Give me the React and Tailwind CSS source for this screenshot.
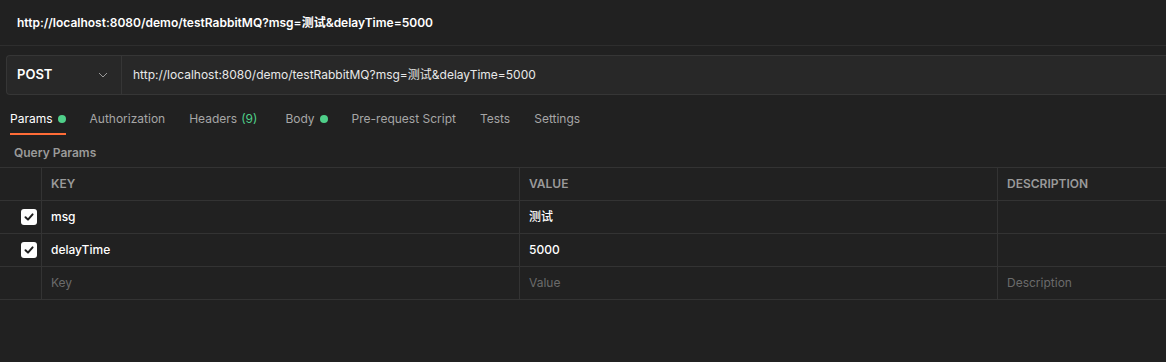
import React from "react";

const font = { fontFamily: 'Inter, "Noto Sans CJK SC", sans-serif' };

function Check() {
  return (
    <div className="w-4 h-4 rounded-[3px] bg-white flex items-center justify-center">
      <svg width="12" height="12" viewBox="0 0 12 12" fill="none">
        <path d="M2.5 6.2 L5 8.6 L9.6 3.4" stroke="#1f1f1f" strokeWidth="2" strokeLinecap="round" strokeLinejoin="round" />
      </svg>
    </div>
  );
}

function Dot() {
  return <span className="inline-block w-2 h-2 rounded-full bg-[#4fcf89] ml-[5px]" />;
}

export default function App() {
  const tabs = [
    { label: "Params", active: true, dot: true },
    { label: "Authorization" },
    { label: "Headers", count: "(9)" },
    { label: "Body", dot: true },
    { label: "Pre-request Script" },
    { label: "Tests" },
    { label: "Settings" },
  ];
  const rows = [
    { key: "msg", value: "测试", checked: true },
    { key: "delayTime", value: "5000", checked: true },
  ];
  return (
    <div className="w-[1166px] h-[362px] bg-[#212121] overflow-hidden text-[12px]" style={font}>
      <div className="h-[46px] border-b border-[#2e2e2e] flex items-center pl-[17px]">
        <span className="font-semibold text-white">http://localhost:8080/demo/testRabbitMQ?msg=测试&amp;delayTime=5000</span>
      </div>
      <div className="pl-[6px] pt-[9px]">
        <div className="h-[40px] flex border border-r-0 border-[#363636] rounded-l-[4px] bg-[#282828]">
          <div className="w-[115px] flex items-center justify-between pl-[10px] pr-[13px] border-r border-[#363636]">
            <span className="font-semibold text-white text-[13px]">POST</span>
            <svg width="10" height="6" viewBox="0 0 10 6" fill="none">
              <path d="M1 1 L5 5 L9 1" stroke="#9a9a9a" strokeWidth="1" />
            </svg>
          </div>
          <div className="flex items-center pl-[11px] text-[#e8e8e8]">
            http://localhost:8080/demo/testRabbitMQ?msg=测试&amp;delayTime=5000
          </div>
        </div>
      </div>
      <div className="flex pl-[10px] gap-[24px] pt-[16px]">
        {tabs.map((t) => (
          <div
            key={t.label}
            className={
              "flex items-center h-[24px] pb-[6px] leading-[16px] text-[12px] border-b-2 " +
              (t.active ? "border-[#ff6c37] text-white" : "border-transparent text-[#a6a6a6]")
            }
          >
            <span>{t.label}</span>
            {t.count && <span className="text-[#4fcf89] ml-[4px] mr-[4px]">{t.count}</span>}
            {t.dot && <Dot />}
          </div>
        ))}
      </div>
      <div className="pl-[14px] h-[32px] pt-[3px] flex items-center text-[12px] font-semibold text-[#9a9a9a]">
        Query Params
      </div>
      <div className="border-t border-[#333333]">
        <div className="flex h-[33px] border-b border-[#333333] text-[12px] font-semibold text-[#9a9a9a]">
          <div className="w-[42px] border-r border-[#333333]" />
          <div className="w-[478px] border-r border-[#333333] flex items-center pl-[9px]">KEY</div>
          <div className="w-[478px] border-r border-[#333333] flex items-center pl-[9px]">VALUE</div>
          <div className="flex-1 flex items-center pl-[9px]">DESCRIPTION</div>
        </div>
        {rows.map((r) => (
          <div key={r.key} className="flex h-[33px] border-b border-[#333333] text-[12px] font-medium text-white">
            <div className="w-[42px] border-r border-[#333333] flex items-center justify-end pr-[4px]">
              <Check />
            </div>
            <div className="w-[478px] border-r border-[#333333] flex items-center pl-[9px]">{r.key}</div>
            <div className="w-[478px] border-r border-[#333333] flex items-center pl-[9px]">{r.value}</div>
            <div className="flex-1" />
          </div>
        ))}
        <div className="flex h-[33px] border-b border-[#333333] text-[12px] text-[#6b6b6b]">
          <div className="w-[42px] border-r border-[#333333]" />
          <div className="w-[478px] border-r border-[#333333] flex items-center pl-[9px]">Key</div>
          <div className="w-[478px] border-r border-[#333333] flex items-center pl-[9px]">Value</div>
          <div className="flex-1 flex items-center pl-[9px]">Description</div>
        </div>
      </div>
    </div>
  );
}
